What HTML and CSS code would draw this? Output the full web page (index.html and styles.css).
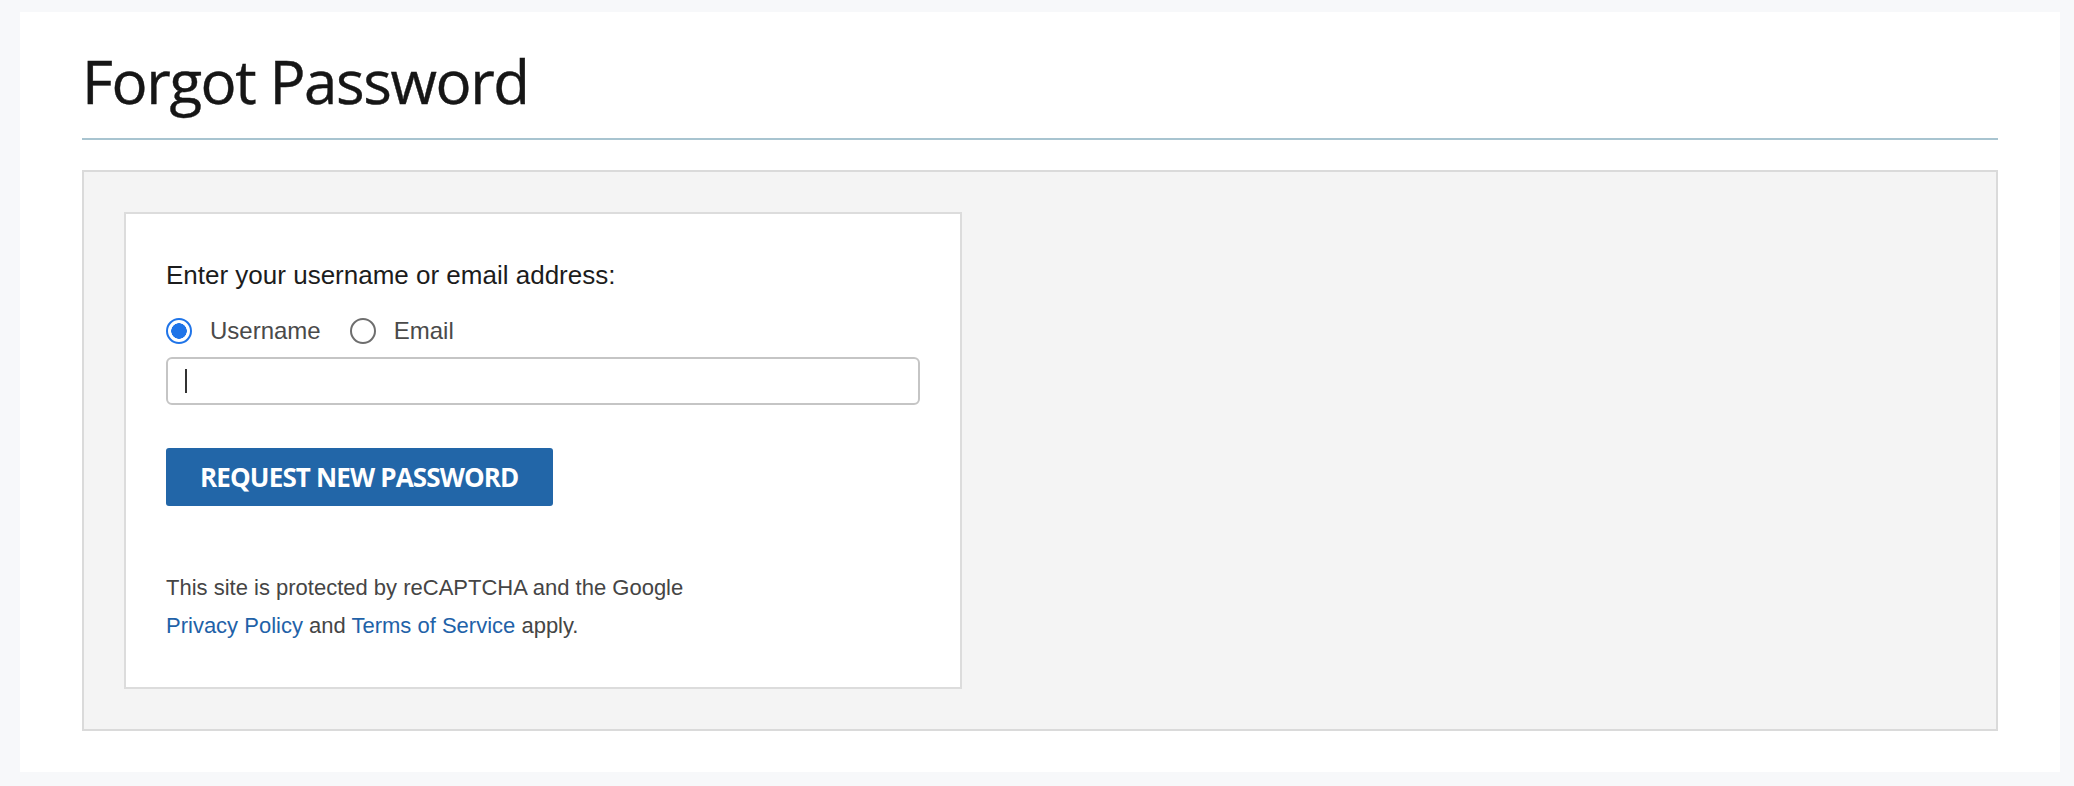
FILE: index.html
```html
<!DOCTYPE html>
<html lang="en">
<head>
<meta charset="utf-8">
<title>Forgot Password</title>
<link rel="stylesheet" href="styles.css">
</head>
<body>
<main class="panel">
  <header class="page-header">
    <h1 class="page-title">Forgot Password</h1>
  </header>
  <section class="well">
    <form class="card">
      <p class="prompt">Enter your username or email address:</p>
      <div class="choice-row">
        <label class="choice"><input type="radio" name="kind" class="radio" checked><span>Username</span></label>
        <label class="choice"><input type="radio" name="kind" class="radio"><span>Email</span></label>
      </div>
      <div class="field"><span class="caret"></span></div>
      <button type="button" class="submit">Request New Password</button>
      <p class="legal">This site is protected by reCAPTCHA and the Google<br><a href="#" class="link">Privacy Policy</a> and <a href="#" class="link">Terms of Service</a> apply.</p>
    </form>
  </section>
</main>
</body>
</html>
```

FILE: styles.css
```css
html, body {
  margin: 0;
  padding: 0;
}

body {
  background: #f7f8fa;
  padding: 12px 14px 14px 20px;
  font-family: "Liberation Sans", Arial, sans-serif;
}

.panel {
  background: #ffffff;
  height: 760px;
  box-sizing: border-box;
  padding: 0 62px;
}

.page-header {
  padding-top: 33px;
  padding-bottom: 21px;
  border-bottom: 2px solid #a8c4d0;
}

.page-title {
  margin: 0;
  font-family: "Open Sans", sans-serif;
  font-weight: 400;
  font-size: 60px;
  line-height: 72px;
  letter-spacing: -1.4px;
  color: #161616;
  -webkit-text-stroke: 0.4px #161616;
}

.well {
  margin-top: 30px;
  background: #f4f4f4;
  border: 2px solid #dadada;
  padding: 40px;
}

.card {
  width: 754px;
  background: #ffffff;
  border: 2px solid #dcdcdc;
  padding: 46px 40px 42px 40px;
}

.prompt {
  margin: 0;
  font-size: 26px;
  line-height: 30px;
  color: #1c1c1c;
}

.choice-row {
  display: flex;
  align-items: center;
  gap: 29px;
  margin-top: 28px;
}

.choice {
  display: flex;
  align-items: center;
  gap: 18px;
  font-size: 24px;
  line-height: 26px;
  color: #4a4a4a;
}

.radio {
  appearance: none;
  -webkit-appearance: none;
  margin: 0;
  width: 26px;
  height: 26px;
  border-radius: 50%;
  border: 2px solid #6e6e6e;
  box-sizing: border-box;
  background: #ffffff;
  flex: none;
}

.radio:checked {
  border: 2.5px solid #1f74e8;
  background: radial-gradient(circle, #1f74e8 0 7.5px, #ffffff 8px);
}

.field {
  margin-top: 13px;
  height: 48px;
  box-sizing: border-box;
  border: 2px solid #c5c5c5;
  border-radius: 6px;
  display: flex;
  align-items: center;
  padding-left: 17px;
}

.caret {
  width: 2px;
  height: 24px;
  background: #333333;
}

.submit {
  display: block;
  margin-top: 43px;
  height: 58px;
  padding: 0 34px;
  border: none;
  border-radius: 3px;
  background: #2266a8;
  color: #ffffff;
  font-family: "Open Sans", sans-serif;
  font-weight: 700;
  font-size: 26px;
  letter-spacing: -0.85px;
  text-transform: uppercase;
  line-height: 58px;
}

.legal {
  margin: 63px 0 0 0;
  font-size: 22px;
  line-height: 38px;
  color: #454545;
}

.link {
  color: #1f62a8;
  text-decoration: none;
}
```
